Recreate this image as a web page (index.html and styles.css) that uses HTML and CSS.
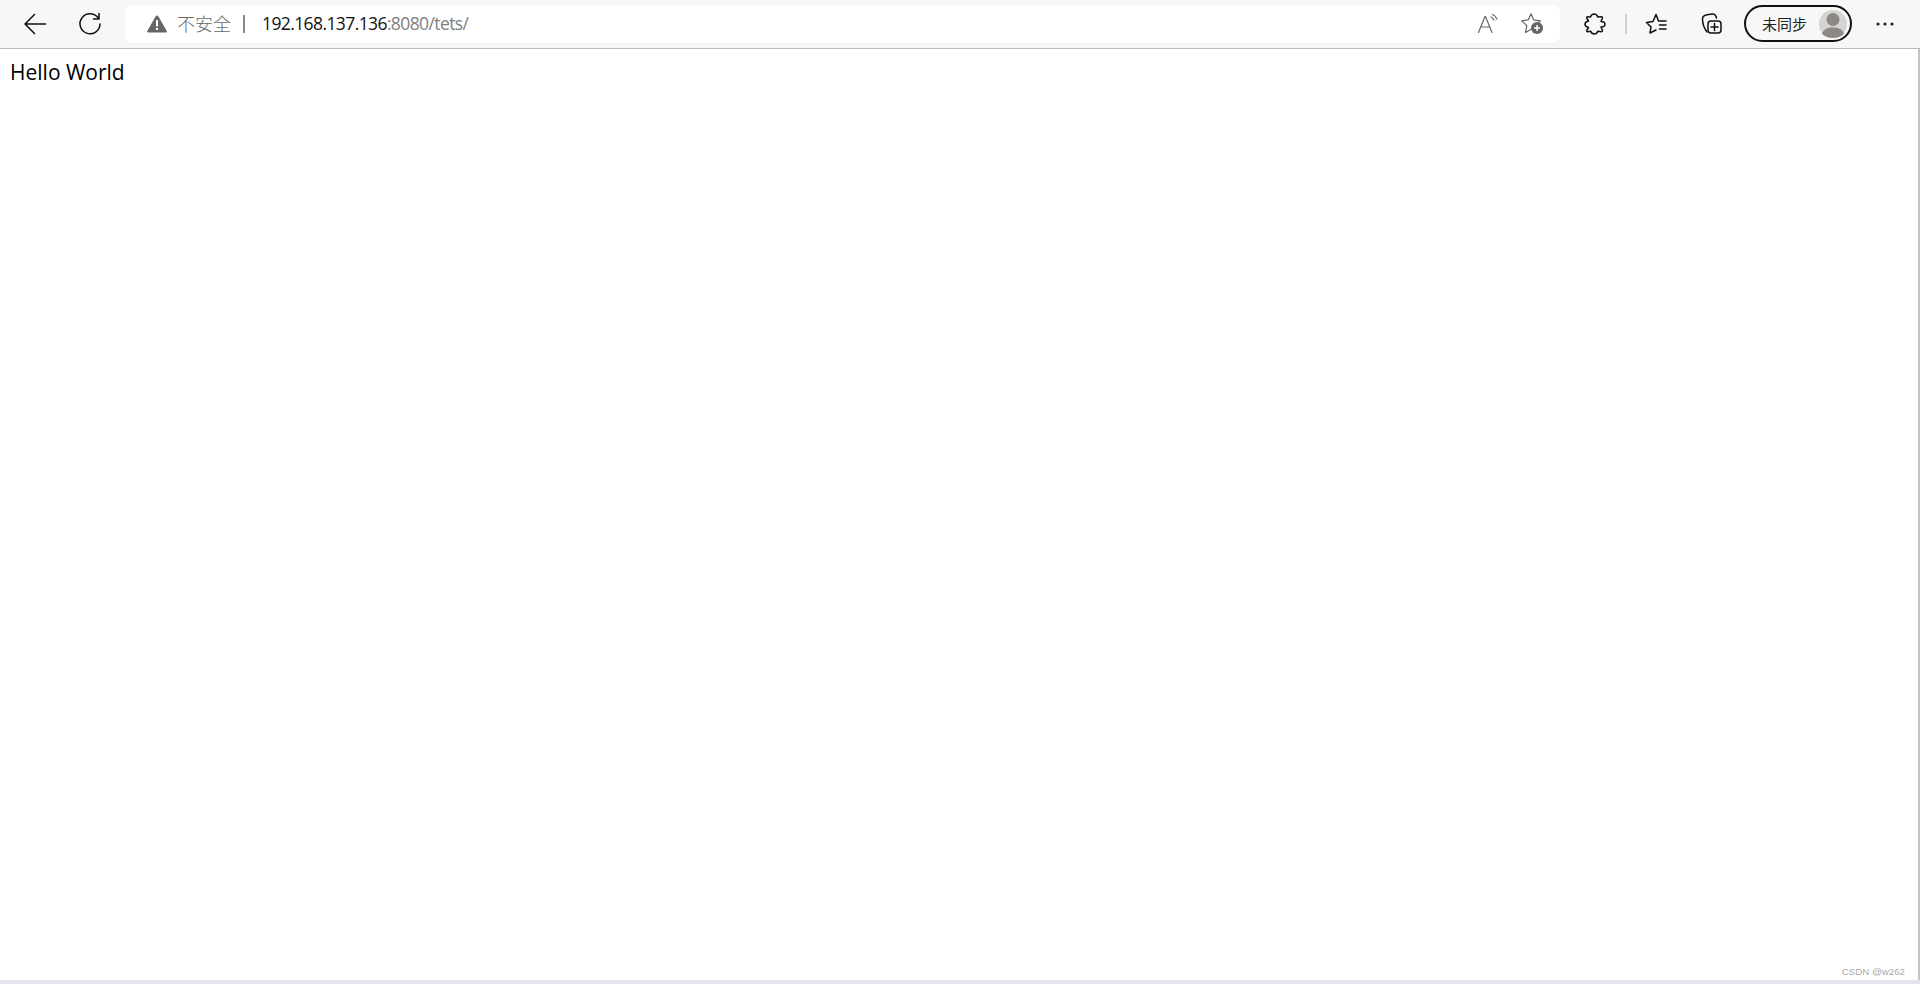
FILE: index.html
```html
<!DOCTYPE html>
<html lang="zh-CN">
<head>
<meta charset="utf-8">
<title>192.168.137.136:8080/tets/</title>
<link rel="stylesheet" href="styles.css">
</head>
<body>
<div class="window">
  <header class="toolbar">
    <button class="nav back" aria-label="后退">
      <svg width="24" height="24" viewBox="0 0 24 24"><path d="M22.500 12H2.500M11.500 2.500L2 12l9.500 9.500" class="ink"/></svg>
    </button>
    <button class="nav reload" aria-label="刷新">
      <svg width="24" height="24" viewBox="0 0 24 24"><path d="M20.500 6.500A10 10 0 1 0 22 12M21 1.500V7h-5.500" class="ink"/></svg>
    </button>
    <div class="address">
      <svg class="warn" width="20" height="18" viewBox="0 0 20 18"><path d="M10 0.500c.6 0 1 .3 1.300.8l8.300 14.400c.5.900 0 1.800-1 1.800H1.400c-1 0-1.500-.9-1-1.800L8.700 1.300c.3-.5.700-.8 1.300-.8z" fill="#666"/><path d="M9 5h2v6.500H9zM9 13h2v2H9z" fill="#fff"/></svg>
      <span class="insecure">不安全</span>
      <span class="sep"></span>
      <span class="url"><span class="host">192.168.137.136</span>:8080/tets/</span>
      <span class="addr-actions">
        <svg width="22" height="22" viewBox="0 0 22 22"><path d="M1.500 19.500L8 3.500h.5l6.500 16M3.800 14h9.400M14 4c1.500.7 2.500 1.700 3 3.200M15.500 1.500c2.300 1 3.700 2.500 4.500 4.700" class="soft"/></svg>
        <svg width="24" height="24" viewBox="0 0 24 24"><path d="M11.500 17L5.500 20.500L6.800 13.500L1.500 8.800L8.200 7.900L11 1.800L13.800 7.900L20.500 8.800L17 12" class="soft"/><circle cx="17" cy="16" r="6" fill="#666"/><path d="M17 13v6M14 16h6" stroke="#fff" stroke-width="1.500"/></svg>
      </span>
    </div>
    <button class="tool ext" aria-label="扩展">
      <svg width="22" height="22" viewBox="0 0 22 22"><path d="M6.500 4C7 2.200 8.500 1 10.200 1C12 1 13.200 2.200 13.800 4L17.500 3.800C18.300 3.800 18.500 4.500 18.400 5.200L17 8.500C19.500 8.500 21 9.700 21 11.300C21 12.900 19.500 14 17 14L18.400 17.200C18.500 18.200 18 18.800 17.200 18.800L13.800 18.300C13.200 20 12 21 10.300 21C8.600 21 7.300 20 6.800 18.300L3.800 18.800C3 18.800 2.500 18.200 2.800 17.400L4.500 14.500C2.200 14 1 12.900 1 11.300C1 9.700 2.200 8.500 4.500 8L2.800 5.200C2.500 4.400 3 3.700 3.800 3.700z" class="ink"/></svg>
    </button>
    <span class="divider"></span>
    <button class="tool fav" aria-label="收藏夹">
      <svg width="24" height="22" viewBox="0 0 24 22"><path d="M13.500 8L11 1.500L8 8.500L1.500 9.500L6 14L5 20L11 17" class="ink"/><path d="M14.500 8H21M14.500 12H21M14.500 16H21" class="ink"/></svg>
    </button>
    <button class="tool coll" aria-label="集锦">
      <svg width="24" height="24" viewBox="0 0 24 24"><path d="M6 20C3 16 1.500 11 1.500 7C1.500 4.500 3 3.500 5 3L11 2C13.500 1.800 15 3.500 15.500 6" class="ink"/><rect x="7" y="9" width="13" height="12" rx="3" class="ink"/><path d="M13.500 11.500v7M10 15h7" class="ink"/></svg>
    </button>
    <div class="profile">
      <span class="sync">未同步</span>
      <span class="avatar">
        <svg width="28" height="28" viewBox="0 0 28 28"><circle cx="14" cy="14" r="14" fill="#d6d4d1"/><circle cx="14" cy="9.500" r="6.500" fill="#8c8985"/><path d="M3 24c1-5 6-6.500 11-6.500S24 19 25 24c-3 2.700-7 4-11 4s-8-1.300-11-4z" fill="#8c8985"/></svg>
      </span>
    </div>
    <button class="tool more" aria-label="更多">
      <svg width="18" height="4" viewBox="0 0 18 4"><circle cx="2" cy="2" r="1.600" fill="#222"/><circle cx="9" cy="2" r="1.600" fill="#222"/><circle cx="16" cy="2" r="1.600" fill="#222"/></svg>
    </button>
  </header>
  <main class="content">
    <p class="hello">Hello World</p>
    <span class="watermark">CSDN @w262</span>
  </main>
</div>
</body>
</html>
```

FILE: styles.css
```css
* { box-sizing: border-box; }
html, body { margin: 0; height: 100%; background: #fff; overflow: hidden; }
body { font-family: "Open Sans", "Noto Sans CJK SC", sans-serif; color: #000; }
.window { height: 984px; display: flex; flex-direction: column; border-bottom: 4px solid #e2e4f2; }
.toolbar { height: 49px; flex: none; display: flex; align-items: center; background: #f7f7f7; border-bottom: 1px solid #bbb; padding-left: 23px; }
button { display: flex; align-items: center; justify-content: center; padding: 0; margin: 0; border: 0; background: none; }
.ink, .soft { fill: none; stroke-linecap: round; stroke-linejoin: round; }
.ink { stroke: #111; stroke-width: 1.500; }
.soft { stroke: #666; stroke-width: 1.200; }
.nav { width: 24px; height: 24px; }
.reload { margin-left: 31px; }
.address { margin-left: 23px; width: 1435px; height: 38px; margin-top: -1px; display: flex; align-items: center; background: #fff; border-radius: 7px; padding-left: 22px; box-shadow: 0 1px 1px rgba(0,0,0,.04); }
.warn { flex: none; }
.insecure { margin-left: 10px; font-family: "Noto Sans CJK SC", sans-serif; font-size: 18px; font-weight: 300; color: #666; padding-bottom: 2px; }
.sep { width: 2px; height: 18px; background: #888; margin-left: 12px; }
.url { margin-left: 17px; font-size: 17.500px; letter-spacing: -.6px; color: #808080; white-space: nowrap; padding-bottom: 2px; }
.host { color: #111; }
.addr-actions { margin-left: auto; padding-right: 16px; display: flex; align-items: center; gap: 21px; }
.tool { flex: none; }
.ext { margin-left: 24px; width: 22px; height: 22px; }
.divider { width: 2px; height: 20px; background: #d0d0d0; margin-left: 19px; }
.fav { margin-left: 18px; }
.coll { margin-left: 32px; }
.profile { margin-left: 19px; width: 108px; height: 37px; margin-top: -1px; flex: none; display: flex; align-items: center; justify-content: space-between; border: 2px solid #111; border-radius: 19px; padding: 0 3px 0 16px; }
.sync { font-family: "Noto Sans CJK SC", sans-serif; font-size: 15px; color: #222; }
.avatar { display: flex; }
.more { margin-left: 24px; }
.content { flex: 1; position: relative; border-right: 2px solid #c4c4c4; }
.hello { margin: 0; padding: 9px 0 0 10px; font-size: 21px; line-height: 29px; }
.watermark { position: absolute; right: 13px; bottom: 3px; font-family: "Liberation Sans", sans-serif; font-size: 9.700px; color: #a8a8a8; }
```
